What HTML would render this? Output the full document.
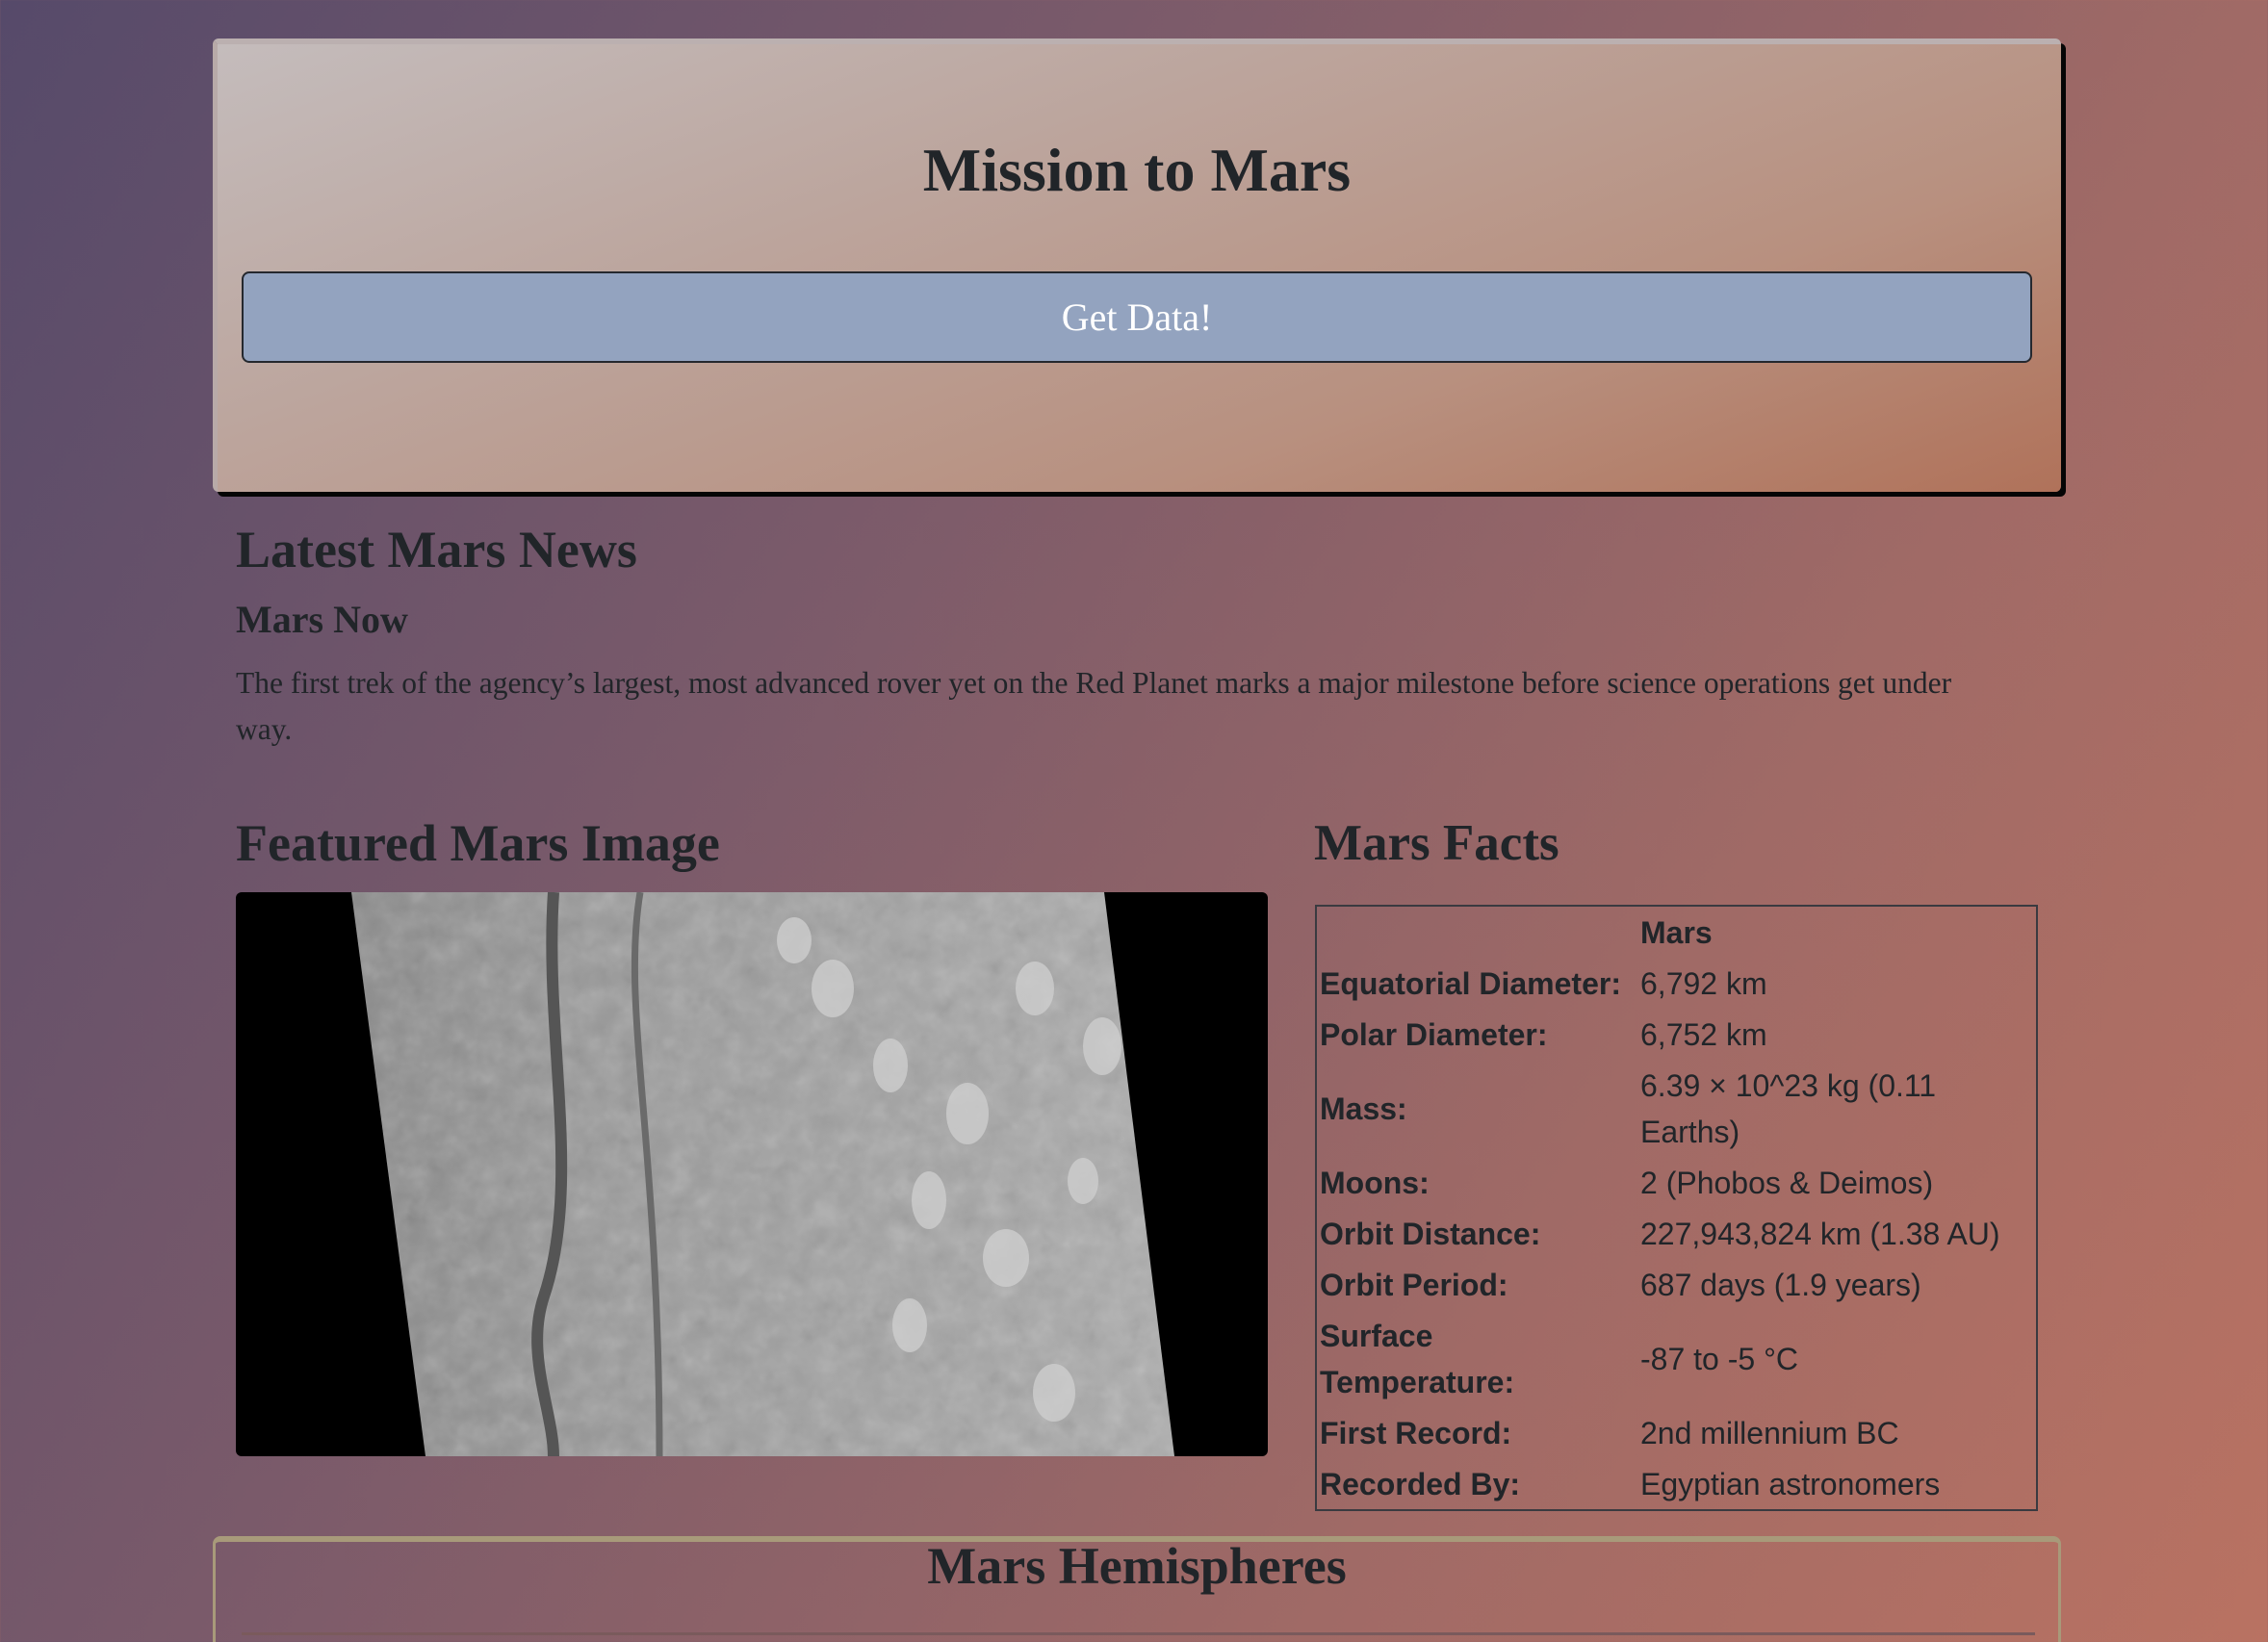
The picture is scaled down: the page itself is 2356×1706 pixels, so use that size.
<!DOCTYPE html>
<html><head><meta charset="utf-8"><style>
*{box-sizing:border-box;margin:0;padding:0}
html,body{width:2356px;height:1706px;overflow:hidden}
body{background:linear-gradient(120deg,#564a6a 0%,#7a5a6a 35%,#a06a66 70%,#b97262 100%);font-family:"Liberation Serif",serif;color:#212529;position:relative}
.jumbo{position:absolute;left:221px;top:40px;width:1920px;height:471px;border-radius:6px;background:linear-gradient(160deg,#c4bcbc 0%,#bca59d 35%,#b8907f 70%,#b0725a 100%);border-top:6px solid #bbb0b0;border-left:5px solid #b8aaa8;box-shadow:5px 5px 0 #050505}
.t{position:absolute;white-space:nowrap;font-weight:bold}
.btn{position:absolute;left:251px;top:282px;width:1860px;height:95px;background:#93a3bf;border:2px solid #25282e;border-radius:8px;color:#fff;font-size:40px;text-align:center;line-height:91px}
p.news{position:absolute;left:245px;top:686px;width:1830px;font-size:31.5px;line-height:48px}
.img{position:absolute;left:245px;top:927px;width:1072px;height:586px;background:#000;border-radius:6px;overflow:hidden}
table{position:absolute;left:1366px;top:940px;width:751px;border:2px solid #3a3a40;border-collapse:collapse;font-family:"Liberation Sans",sans-serif;font-size:32px;line-height:48px}
td,th{padding:2.5px 3px;text-align:left;vertical-align:middle;white-space:nowrap}
th{font-weight:bold}
.hem{position:absolute;left:221px;top:1596px;width:1920px;height:140px;border:3px solid #a89a7a;border-top-width:6px;border-radius:8px}
</style></head><body>
<div class="jumbo"></div>
<div class="t" style="left:0;width:2362px;text-align:center;top:140px;font-size:64px">Mission to Mars</div>
<div class="btn">Get Data!</div>
<div class="t" style="left:245px;top:540px;font-size:54px">Latest Mars News</div>
<div class="t" style="left:245px;top:620px;font-size:40px">Mars Now</div>
<p class="news">The first trek of the agency’s largest, most advanced rover yet on the Red Planet marks a major milestone before science operations get under way.</p>
<div class="t" style="left:245px;top:845px;font-size:54px">Featured Mars Image</div>
<div class="t" style="left:1365px;top:846px;font-size:53px">Mars Facts</div>
<div class="img"><svg width="1072" height="586" viewBox="0 0 1072 586">
<defs><linearGradient id="g" x1="0" y1="0" x2="1" y2="0"><stop offset="0" stop-color="#8a8a8a"/><stop offset="0.3" stop-color="#9a9a9a"/><stop offset="0.6" stop-color="#a2a2a2"/><stop offset="1" stop-color="#acacac"/></linearGradient>
<filter id="n"><feTurbulence type="fractalNoise" baseFrequency="0.04" numOctaves="3"/><feColorMatrix type="saturate" values="0"/><feComponentTransfer><feFuncA type="linear" slope="0.35"/></feComponentTransfer><feComposite in2="SourceGraphic" operator="in"/></filter></defs>
<polygon points="120,0 902,0 975,586 197,586" fill="url(#g)"/>
<polygon points="120,0 902,0 975,586 197,586" fill="#888" filter="url(#n)"/>
<path d="M330,0 C320,150 360,300 320,420 C300,480 330,540 330,586" stroke="#555" stroke-width="12" fill="none"/>
<path d="M420,0 C400,120 440,260 440,586" stroke="#6a6a6a" stroke-width="7" fill="none"/>
<g fill="#d0d0d0" opacity="0.75"><ellipse cx="620" cy="100" rx="22" ry="30"/><ellipse cx="680" cy="180" rx="18" ry="28"/><ellipse cx="760" cy="230" rx="22" ry="32"/><ellipse cx="720" cy="320" rx="18" ry="30"/><ellipse cx="800" cy="380" rx="24" ry="30"/><ellipse cx="850" cy="520" rx="22" ry="30"/><ellipse cx="700" cy="450" rx="18" ry="28"/><ellipse cx="830" cy="100" rx="20" ry="28"/><ellipse cx="580" cy="50" rx="18" ry="24"/><ellipse cx="900" cy="160" rx="20" ry="30"/><ellipse cx="880" cy="300" rx="16" ry="24"/></g>
</svg></div>
<table>
<tr><th style="width:334px"></th><th>Mars</th></tr>
<tr><th>Equatorial Diameter:</th><td>6,792 km</td></tr>
<tr><th>Polar Diameter:</th><td>6,752 km</td></tr>
<tr><th>Mass:</th><td>6.39 × 10^23 kg (0.11<br>Earths)</td></tr>
<tr><th>Moons:</th><td>2 (Phobos &amp; Deimos)</td></tr>
<tr><th>Orbit Distance:</th><td>227,943,824 km (1.38 AU)</td></tr>
<tr><th>Orbit Period:</th><td>687 days (1.9 years)</td></tr>
<tr><th>Surface<br>Temperature:</th><td>-87 to -5 °C</td></tr>
<tr><th>First Record:</th><td>2nd millennium BC</td></tr>
<tr><th>Recorded By:</th><td>Egyptian astronomers</td></tr>
</table>
<div class="hem"><div style="position:absolute;left:27px;right:24px;top:94px;height:3px;background:#7a5a5c"></div></div>
<div class="t" style="left:0;width:2362px;text-align:center;top:1596px;font-size:54px">Mars Hemispheres</div>
</body></html>
